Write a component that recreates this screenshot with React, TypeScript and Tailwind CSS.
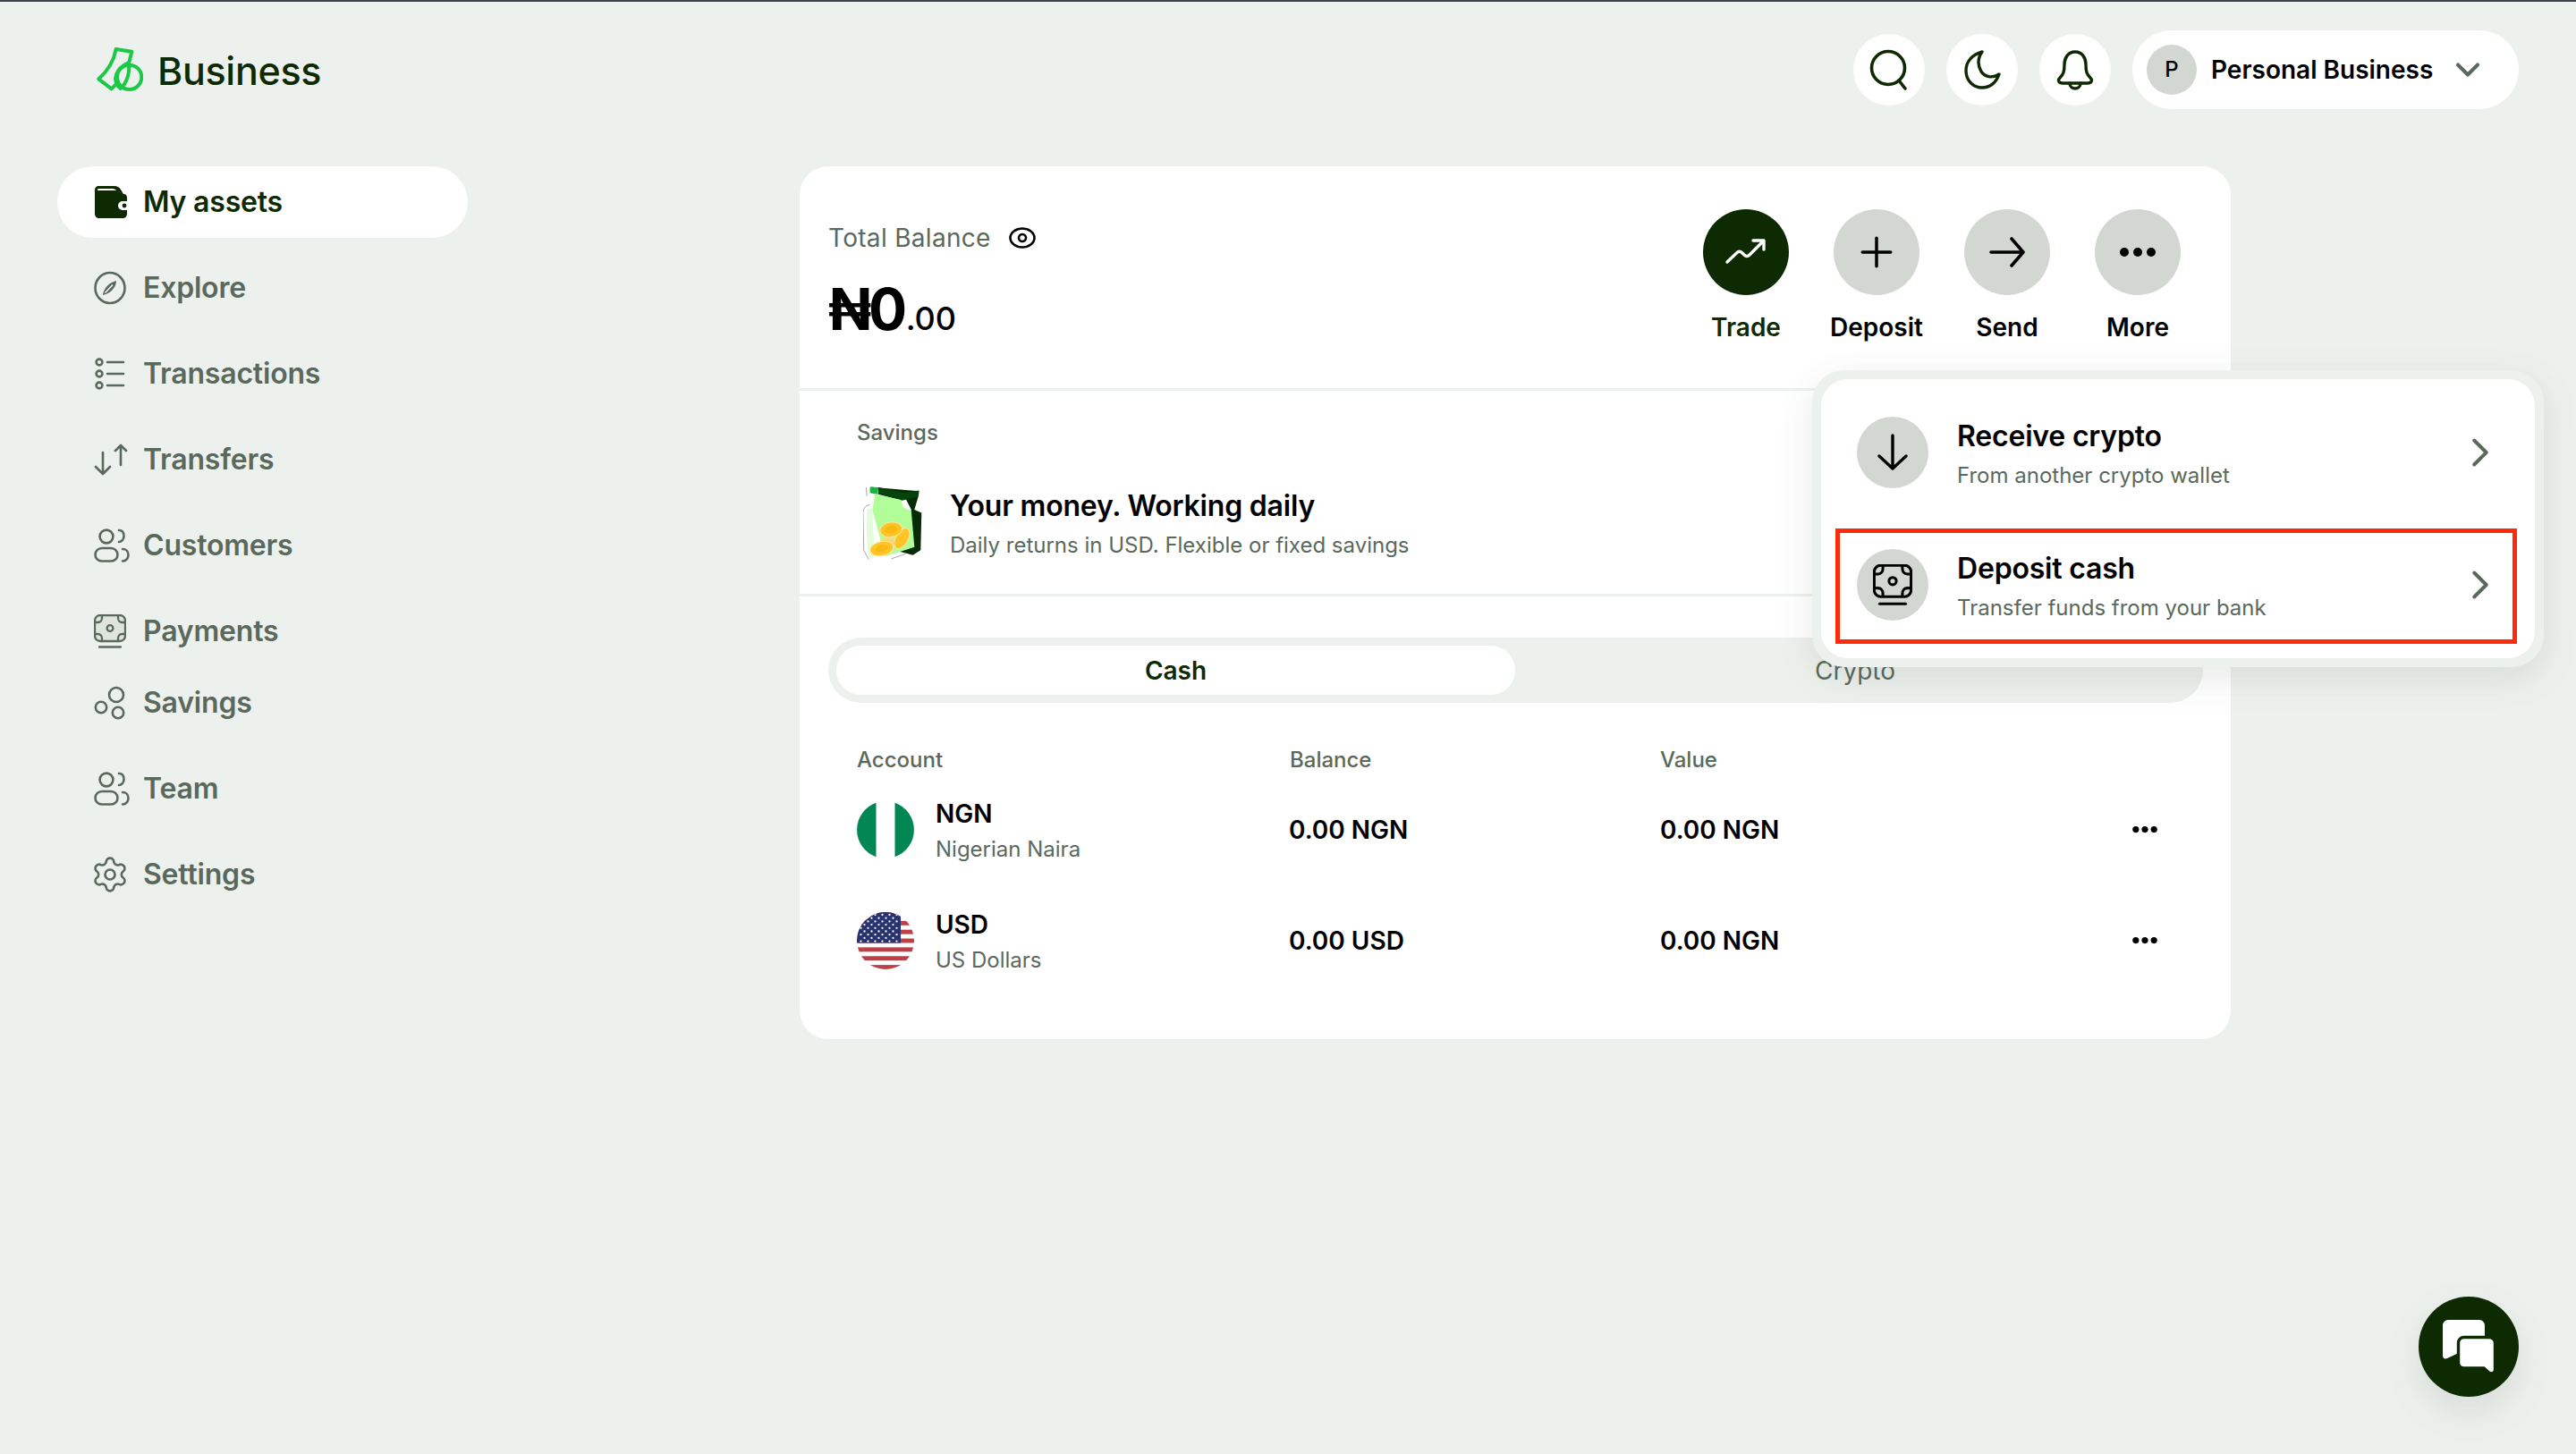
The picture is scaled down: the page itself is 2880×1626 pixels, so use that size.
import { ReactNode } from "react";
import { Settings, ChevronDown, ChevronRight, Plus } from "lucide-react";

const gray = "#5a695c";

function Logo() {
    return (
        <svg width="52" height="52" viewBox="56 70 156 150" fill="none" stroke="#1bc946" strokeWidth="12" strokeLinejoin="round" strokeLinecap="round">
            <circle cx="166" cy="170" r="41" />
            <path d="M121 76L174 84L165 120" />
            <path d="M121 76C115 110 97 145 63 176L106 209L121 194" />
            <path d="M136 208C104 180 122 140 162 122C170 150 158 190 136 208" />
        </svg>
    );
}

function WalletIcon() {
    return (
        <svg width="36" height="36" viewBox="0 0 36 36">
            <path fill="#0e2a02" d="M4 0H22C25 0 27 1 29 4L32 9C35 9 36 11 36 13V17H31A5 5 0 0 0 31 27H36V31C36 34 34 36 31 36H5C2 36 0 34 0 31V4C0 2 2 0 4 0Z" />
            <path fill="#fff" d="M4 3H20C22 3 23 4 24 5H3C3 4 3 3 4 3Z" />
            <circle cx="33" cy="22" r="2.4" fill="#0e2a02" />
        </svg>
    );
}

function ExploreIcon() {
    return (
        <svg width="36" height="38" viewBox="0 0 36 38" fill="none" stroke={gray} strokeWidth="2.6">
            <ellipse cx="18" cy="19" rx="16.5" ry="17" />
            <path fill={gray} stroke="none" d="M10 27C11 19 17 13 25 11C25 18 19 25 10 27Z" />
            <path stroke="#edf1ee" strokeWidth="1.6" d="M12.5 24.5L21 15.5" />
        </svg>
    );
}

function TransactionsIcon() {
    return (
        <svg width="36" height="36" viewBox="0 0 36 36" fill="none" stroke={gray} strokeWidth="2.6" strokeLinecap="round">
            <circle cx="6" cy="5" r="3.4" />
            <circle cx="6" cy="18" r="3.4" />
            <circle cx="6" cy="31" r="3.4" />
            <path d="M15 5H33M15 18H33M15 31H33" />
        </svg>
    );
}

function TransfersIcon() {
    return (
        <svg width="38" height="36" viewBox="0 0 38 36" fill="none" stroke={gray} strokeWidth="2.6" strokeLinecap="round" strokeLinejoin="round">
            <path d="M10 10V34M2 26L10 34L18 26" />
            <path d="M30 2V24M24 8L30 2L36 8" />
        </svg>
    );
}

function PeopleIcon() {
    return (
        <svg width="40" height="38" viewBox="0 0 40 38" fill="none" stroke={gray} strokeWidth="2.6" strokeLinecap="round">
            <circle cx="14" cy="9" r="7.4" />
            <path d="M28 2C32 2 33.5 5 33.5 8.5C33.5 12 31 15 28 15" />
            <rect x="1.5" y="22" width="25" height="14.5" rx="7.25" />
            <path d="M32 23C36 23 38.5 26 38.5 29.5C38.5 33 36 36.5 32 36.5" />
        </svg>
    );
}

function MoneyIcon({ color, fill, width, height, weight }: { color: string; fill: string; width: number; height: number; weight: number }) {
    return (
        <svg width={width} height={height} viewBox="0 0 36 38" fill="none" stroke={color} strokeWidth={weight} strokeLinecap="round">
            <rect x="1" y="1" width="34" height="29" rx="6" fill={fill} />
            <circle cx="18" cy="15.5" r="3.4" />
            <path d="M1.5 9H4.5C7 9 9 7 9 4V1.5M34.5 9H31.5C29 9 27 7 27 4V1.5M1.5 22H4.5C7 22 9 24 9 27V29.5M34.5 22H31.5C29 22 27 24 27 27V29.5" />
            <path d="M6 36.5H30" />
        </svg>
    );
}

function SavingsIcon() {
    return (
        <svg width="36" height="38" viewBox="0 0 36 38" fill="none" stroke={gray} strokeWidth="2.6">
            <circle cx="25" cy="10" r="8" />
            <circle cx="8" cy="24" r="6.2" />
            <circle cx="27" cy="30" r="6.2" />
        </svg>
    );
}

const navItems: { label: string; icon: ReactNode; tight?: boolean }[] = [
    { label: "Explore", icon: <ExploreIcon /> },
    { label: "Transactions", icon: <TransactionsIcon /> },
    { label: "Transfers", icon: <TransfersIcon /> },
    { label: "Customers", icon: <PeopleIcon /> },
    { label: "Payments", icon: <MoneyIcon color={gray} fill="#dfe4df" width={36} height={38} weight={2.3} /> },
    { label: "Savings", icon: <SavingsIcon />, tight: true },
    { label: "Team", icon: <PeopleIcon /> },
    { label: "Settings", icon: <Settings className="-ml-[4px]" size={44} color={gray} strokeWidth={1.45} /> },
];

function Sidebar() {
    return (
        <nav className="ml-[64px] w-[459px] shrink-0 flex flex-col">
            <div className="h-[80px] rounded-full bg-white flex items-center pl-[42px] gap-[18px] text-[32px] font-semibold text-[#0e2a02] tracking-[-0.2px]">
                <WalletIcon />
                <span>My assets</span>
            </div>
            {navItems.map((item) => (
                <div key={item.label} className={`h-[80px] flex items-center pl-[42px] text-[32px] font-semibold text-[#5a695c] tracking-[-0.2px] ${item.tight ? "" : "mt-[16px]"}`}>
                    <span className="w-[55px] shrink-0 flex items-center -ml-[1px]">{item.icon}</span>
                    <span>{item.label}</span>
                </div>
            ))}
        </nav>
    );
}

function TrendIcon() {
    return (
        <svg width="48" height="36" viewBox="0 0 48 36" fill="none" stroke="#fff" strokeWidth="3.4" strokeLinecap="round" strokeLinejoin="round">
            <path d="M3 29L14 18.5C16 16.5 18 17 20 19L22 21C24 23 26 23 28 21L43 6" />
            <path d="M32 5H44V15" />
        </svg>
    );
}

function SendArrow() {
    return (
        <svg width="40" height="34" viewBox="0 0 40 34" fill="none" stroke="#000" strokeWidth="3.6" strokeLinecap="round" strokeLinejoin="round">
            <path d="M2 17H38M25 2L38 17L25 32" />
        </svg>
    );
}

function Dots({ width, r, gap }: { width: number; r: number; gap: number }) {
    const mid = width / 2;
    return (
        <svg width={width} height={r * 2 + 2} viewBox={`0 0 ${width} ${r * 2 + 2}`} fill="#000">
            <circle cx={mid - gap} cy={r + 1} r={r} />
            <circle cx={mid} cy={r + 1} r={r} />
            <circle cx={mid + gap} cy={r + 1} r={r} />
        </svg>
    );
}

const actions = [
    { label: "Trade", dark: true, icon: <TrendIcon /> },
    { label: "Deposit", icon: <Plus size={54} color="#000" strokeWidth={1.55} /> },
    { label: "Send", icon: <SendArrow /> },
    { label: "More", icon: <Dots width={40} r={5} gap={15} /> },
];

function JarArt() {
    return (
        <svg width="66" height="84" viewBox="50 40 190 240" fill="none">
            <path d="M72 46L230 60L228 76L215 120L238 130L235 250L210 266L170 255L205 120L180 70Z" fill="#062b06" />
            <path d="M72 46L98 48L96 70L72 66Z" fill="#13b83d" />
            <path d="M98 48L180 64L230 58L225 78L175 90L98 70Z" fill="#06420b" />
            <path d="M88 70L172 88L178 112L205 124L215 240L120 270L80 120Z" fill="#b1fd98" />
            <path d="M62 118L78 114L88 270L70 278C60 220 60 170 62 118Z" fill="#e3fdd9" />
            <path d="M60 48L62 76M72 104C60 106 52 112 50 126L52 250L68 280M140 278L186 262" stroke="#555" strokeWidth="1.5" />
            <ellipse cx="175" cy="212" rx="20" ry="36" transform="rotate(30 175 212)" fill="#ffc527" stroke="#fde6a0" strokeWidth="3" />
            <ellipse cx="128" cy="224" rx="24" ry="14" fill="#fdd775" />
            <ellipse cx="140" cy="184" rx="36" ry="24" transform="rotate(-8 140 184)" fill="#ffc527" stroke="#fde6a0" strokeWidth="3" />
            <ellipse cx="140" cy="184" rx="20" ry="12" transform="rotate(-8 140 184)" fill="#f9b912" />
            <ellipse cx="110" cy="245" rx="38" ry="23" transform="rotate(-12 110 245)" fill="#ffc527" stroke="#fde6a0" strokeWidth="3" />
            <ellipse cx="110" cy="245" rx="21" ry="11" transform="rotate(-12 110 245)" fill="#f9b912" />
        </svg>
    );
}

function NigeriaFlag() {
    return (
        <svg width="64" height="64" viewBox="0 0 64 64">
            <circle cx="32" cy="32" r="32" fill="#fff" />
            <path fill="#008753" d="M21.5 1.8A32 32 0 0 0 21.5 62.2ZM42.5 1.8V62.2A32 32 0 0 0 42.5 1.8Z" />
        </svg>
    );
}

function UsFlag() {
    const stripes = [0, 1, 2, 3, 4, 5, 6];
    const stars: [number, number][] = [];
    for (let r = 0; r < 9; r++) {
        for (let c = 0; c < (r % 2 ? 5 : 6); c++) {
            stars.push([(r % 2 ? 8.5 : 4.5) + c * 8, 3 + r * 3.7]);
        }
    }
    return (
        <svg width="64" height="64" viewBox="0 0 64 64">
            <defs>
                <clipPath id="us-clip">
                    <circle cx="32" cy="32" r="32" />
                </clipPath>
            </defs>
            <g clipPath="url(#us-clip)">
                <rect width="64" height="64" fill="#fff" />
                {stripes.map((i) => (
                    <rect key={i} y={i * 9.85} width="64" height="4.92" fill="#bf3f47" />
                ))}
                <rect width="49" height="34.5" fill="#27346f" />
                {stars.map(([x, y], i) => (
                    <circle key={i} cx={x} cy={y} r="1.15" fill="#fff" />
                ))}
            </g>
        </svg>
    );
}

const accounts = [
    { code: "NGN", name: "Nigerian Naira", flag: <NigeriaFlag />, balance: "0.00 NGN", value: "0.00 NGN" },
    { code: "USD", name: "US Dollars", flag: <UsFlag />, balance: "0.00 USD", value: "0.00 NGN" },
];

function EyeIcon() {
    return (
        <svg width="30" height="24" viewBox="0 0 30 24" fill="none" stroke="#000" strokeWidth="2.6">
            <path d="M1.5 12C1.5 6 8 1.5 15 1.5S28.5 6 28.5 12S22 22.5 15 22.5S1.5 18 1.5 12Z" />
            <circle cx="15" cy="12" r="4" />
        </svg>
    );
}

function PopupRow({ icon, title, sub }: { icon: ReactNode; title: string; sub: string }) {
    return (
        <div className="h-[148px] flex items-center pl-[40px] pr-[34px]">
            <div className="w-[80px] h-[80px] rounded-full bg-[#d2d8d1] flex items-center justify-center shrink-0">{icon}</div>
            <div className="ml-[33px] pt-[8px] flex-1 -translate-x-[1px]">
                <div className="text-[32px] leading-[44px] font-semibold text-black tracking-[-0.2px]">{title}</div>
                <div className="text-[24px] leading-[44px] text-[#5a695c]">{sub}</div>
            </div>
            <ChevronRight size={54} color={gray} strokeWidth={1.75} />
        </div>
    );
}

function Popup() {
    return (
        <div className="absolute left-[1132px] top-[228px] w-[818px] h-[332px] rounded-[36px] bg-[#edf1ee] shadow-[0_12px_40px_rgba(60,70,60,0.12)] pt-[10px] px-[10px]">
            <div className="relative h-[312px] rounded-[30px] bg-white pt-[8px]">
                <PopupRow
                    icon={
                        <svg width="34" height="42" viewBox="0 0 34 42" fill="none" stroke="#000" strokeWidth="3.4" strokeLinecap="round" strokeLinejoin="round">
                            <path d="M17 2V39M2 25L17 39L32 25" />
                        </svg>
                    }
                    title="Receive crypto"
                    sub="From another crypto wallet"
                />
                <PopupRow icon={<MoneyIcon color="#000" fill="transparent" width={44} height={46} weight={2.5} />} title="Deposit cash" sub="Transfer funds from your bank" />
                <div className="absolute left-[16px] top-[167px] w-[762px] h-[129px] border-[5px] border-[#ff2a0a]" />
            </div>
        </div>
    );
}

function Card() {
    return (
        <section className="relative ml-[371px] w-[1600px] h-[976px] rounded-[32px] bg-white">
            <div className="h-[251px] flex justify-between pl-[32px] pr-[56px] border-b-[3px] border-[#edf1ee]">
                <div className="pt-[60px]">
                    <div className="flex items-center gap-[20px] text-[28px] leading-[40px] text-[#5a695c] tracking-[0.3px]">
                        <span>Total Balance</span>
                        <EyeIcon />
                    </div>
                    <div className="mt-[22px] text-black flex items-baseline">
                        <span className="text-[64px] leading-[76px] font-bold tracking-[-3.5px]">₦0</span>
                        <span className="ml-[2px] text-[36px] leading-[76px] font-medium">.00</span>
                    </div>
                </div>
                <div className="pt-[48px] flex gap-[50px]">
                    {actions.map((a) => (
                        <div key={a.label} className="w-[96px] flex flex-col items-center">
                            <div className={`w-[96px] h-[96px] rounded-full flex items-center justify-center ${a.dark ? "bg-[#0e2a02]" : "bg-[#d2d8d1]"}`}>{a.icon}</div>
                            <div className={`mt-[16px] text-[28px] leading-[40px] font-semibold whitespace-nowrap ${a.dark ? "text-[#0e2a02]" : "text-black"}`}>{a.label}</div>
                        </div>
                    ))}
                </div>
            </div>

            <div className="h-[230px] pl-[64px] border-b-[3px] border-[#edf1ee]">
                <div className="pt-[30px] text-[24px] leading-[34px] font-medium text-[#5a695c]">Savings</div>
                <div className="mt-[43px] flex items-center">
                    <span className="ml-[7px] -mt-[8px] w-[97px] shrink-0"><JarArt /></span>
                    <div>
                        <div className="text-[32px] leading-[44px] font-semibold text-black tracking-[-0.2px]">Your money. Working daily</div>
                        <div className="text-[24px] leading-[44px] text-[#5a695c]">Daily returns in USD. Flexible or fixed savings</div>
                    </div>
                </div>
            </div>

            <div className="mt-[46px] ml-[32px] w-[1537px] h-[73px] rounded-[37px] bg-[#edf1ee] p-[9px] flex text-[28px] leading-[57px] text-center">
                <div className="w-[759px] h-[55px] rounded-full bg-white font-semibold text-[#0e2a02]">Cash</div>
                <div className="flex-1 text-[#5a695c]">Crypto</div>
            </div>

            <div className="mt-[46px] px-[64px]">
                <div className="grid grid-cols-[484px_414px_1fr] text-[24px] leading-[36px] font-medium text-[#5a695c]">
                    <div>Account</div>
                    <div>Balance</div>
                    <div>Value</div>
                </div>
                <div className="mt-[12px] flex flex-col gap-[28px]">
                    {accounts.map((acc) => (
                        <div key={acc.code} className="h-[96px] grid grid-cols-[484px_414px_1fr_64px] items-center text-[28px] font-semibold text-black">
                            <div className="flex items-center gap-[24px]">
                                {acc.flag}
                                <div className="pt-[3px]">
                                    <div className="leading-[40px]">{acc.code}</div>
                                    <div className="text-[24px] leading-[40px] font-normal text-[#5a695c]">{acc.name}</div>
                                </div>
                            </div>
                            <div className="-ml-[1px]">{acc.balance}</div>
                            <div>{acc.value}</div>
                            <span className="justify-self-center"><Dots width={28} r={3.6} gap={10.2} /></span>
                        </div>
                    ))}
                </div>
            </div>

            <Popup />
        </section>
    );
}

function RoundButton({ children }: { children: ReactNode }) {
    return <div className="w-[80px] h-[80px] rounded-full bg-white flex items-center justify-center">{children}</div>;
}

function ChatButton() {
    return (
        <div className="absolute left-[2704px] top-[1448px] w-[112px] h-[112px] rounded-full bg-[#0e2a02] shadow-[0_16px_40px_rgba(60,70,60,0.12)] flex items-center justify-center">
            <svg width="58" height="60" viewBox="0 0 58 60">
                <path fill="#fff" d="M6 0H41C44 0 47 3 47 6V36H20L5 43C2 44 0 43 0 40V6C0 3 3 0 6 0Z" />
                <path fill="#fff" stroke="#0e2a02" strokeWidth="3.4" d="M24 19.5H51C55 19.5 58.5 22 58.5 26V56C58.5 60 54 61 51 58.5L46 54H24C20 54 17.5 51 17.5 47V26C17.5 22 20 19.5 24 19.5Z" />
            </svg>
        </div>
    );
}

export default function App() {
    return (
        <div className="relative h-[1626px] overflow-hidden bg-[#edf1ee] border-t-2 border-[#3f454d] font-[Inter,sans-serif]">
            <header className="h-[152px] flex items-center justify-between pl-[108px] pr-[64px]">
                <div className="flex items-center gap-[16px] text-[43px] font-medium text-[#0e2a02] tracking-[-0.3px]">
                    <Logo />
                    <span className="mt-[3px]">Business</span>
                </div>
                <div className="flex items-center gap-[24px]">
                    <RoundButton>
                        <svg width="44" height="46" viewBox="0 0 44 46" fill="none" stroke="#0e2a02" strokeWidth="3.6" strokeLinecap="round">
                            <circle cx="21" cy="21" r="18.5" />
                            <path d="M33 35L40 44" />
                        </svg>
                    </RoundButton>
                    <RoundButton>
                        <svg width="42" height="46" viewBox="0 0 42 46" fill="none" stroke="#0e2a02" strokeWidth="3.4" strokeLinejoin="round">
                            <path d="M21 3C11 6 3 13 3 24C3 36 12 43 21 43C30 43 37 37 40 28C32 33 24 31 20 25C16 18 16 10 21 3Z" />
                        </svg>
                    </RoundButton>
                    <RoundButton>
                        <svg width="42" height="46" viewBox="0 0 42 46" fill="none" stroke="#0e2a02" strokeWidth="3.4" strokeLinejoin="round" strokeLinecap="round">
                            <path d="M21 3C13 3 9 10 9 17C9 25 8 28 4 32C1 35 3 38 7 38H35C39 38 41 35 38 32C34 28 33 25 33 17C33 10 29 3 21 3Z" />
                            <path d="M15 38C15 42 18 44 21 44C24 44 27 42 27 38" />
                        </svg>
                    </RoundButton>
                    <div className="h-[88px] w-[432px] rounded-full bg-white flex items-center pl-[16px]">
                        <div className="w-[56px] h-[56px] rounded-full bg-[#d2d8d1] flex items-center justify-center text-[24px] font-medium text-black">P</div>
                        <span className="ml-[16px] text-[28px] font-semibold text-black">Personal Business</span>
                        <ChevronDown className="ml-[17px]" size={44} color={gray} strokeWidth={2.2} />
                    </div>
                </div>
            </header>
            <div className="mt-[32px] flex">
                <Sidebar />
                <Card />
            </div>
            <ChatButton />
        </div>
    );
}
